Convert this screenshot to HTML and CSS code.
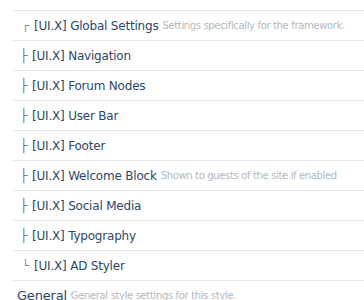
FILE: index.html
```html
<!DOCTYPE html>
<html lang="en">
<head>
  <meta charset="UTF-8" />
  <title>Style Properties</title>
  <link rel="stylesheet" href="styles.css">
</head>
<body>

  <div class="group-list">
    <div class="row row-cut"></div>

    <div class="row child">
      <span class="branch first">┌</span>
      <a class="title" href="#">[UI.X] Global Settings</a>
      <span class="desc">Settings specifically for the framework.</span>
    </div>
    <div class="row child">
      <span class="branch">├</span>
      <a class="title" href="#">[UI.X] Navigation</a>
    </div>
    <div class="row child">
      <span class="branch">├</span>
      <a class="title" href="#">[UI.X] Forum Nodes</a>
    </div>
    <div class="row child">
      <span class="branch">├</span>
      <a class="title" href="#">[UI.X] User Bar</a>
    </div>
    <div class="row child">
      <span class="branch">├</span>
      <a class="title" href="#">[UI.X] Footer</a>
    </div>
    <div class="row child">
      <span class="branch">├</span>
      <a class="title" href="#">[UI.X] Welcome Block</a>
      <span class="desc">Shown to guests of the site if enabled</span>
    </div>
    <div class="row child">
      <span class="branch">├</span>
      <a class="title" href="#">[UI.X] Social Media</a>
    </div>
    <div class="row child">
      <span class="branch">├</span>
      <a class="title" href="#">[UI.X] Typography</a>
    </div>
    <div class="row child">
      <span class="branch last">└</span>
      <a class="title" href="#">[UI.X] AD Styler</a>
    </div>

    <div class="row top">
      <a class="title big" href="#">General</a>
      <span class="desc">General style settings for this style.</span>
    </div>
  </div>

</body>
</html>
```

FILE: styles.css
```css
body {
  margin: 0;
  background: #fff;
  font-family: 'DejaVu Sans', Verdana, sans-serif;
  color: #2f4a6b;
  overflow: hidden;
}

.group-list {
  margin-left: 13px;
}

.row {
  display: flex;
  align-items: center;
  height: 29px;
  border-bottom: 1px solid #e3eaf1;
  white-space: nowrap;
  overflow: hidden;
}

/* bottom edge of the row scrolled out above */
.row-cut {
  height: 10px;
}

.child {
  padding-left: 7px;
}

.branch {
  color: #6d7f95;
  font-size: 13px;
  width: 10px;
  margin-right: 2px;
}

.branch.first,
.branch.last {
  margin-left: 2px;
  font-size: 11px;
}

.title {
  color: #2c4766;
  text-decoration: none;
  font-size: 12px;
  letter-spacing: -0.2px;
}

.title.big {
  font-size: 13px;
}

.desc {
  color: #b3b8be;
  font-size: 10px;
  letter-spacing: -0.35px;
  margin-left: 4px;
}

.top {
  padding-left: 4px;
  border-bottom: none;
}
```
